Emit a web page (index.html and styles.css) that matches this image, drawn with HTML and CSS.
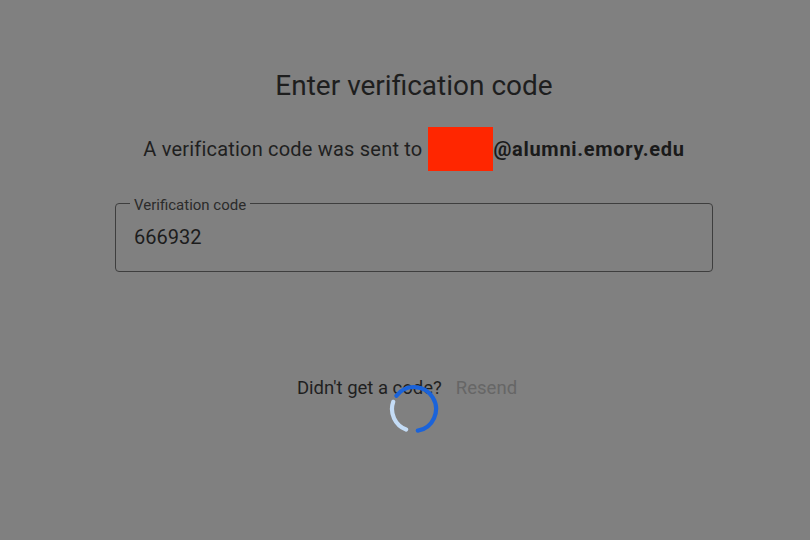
FILE: index.html
```html
<!DOCTYPE html>
<html lang="en">
<head>
<meta charset="utf-8">
<title>Enter verification code</title>
<link rel="stylesheet" href="styles.css">
</head>
<body>
<main class="page">
  <h1 class="title">Enter verification code</h1>
  <p class="subtitle">
    <span class="subtitle-text">A verification code was sent to</span>
    <span class="redact"></span>
    <strong class="email">@alumni.emory.edu</strong>
  </p>
  <div class="field">
    <label class="field-label" for="code">Verification code</label>
    <div class="field-value" id="code">666932</div>
  </div>
  <div class="resend-row">
    <span class="resend-q">Didn't get a code?</span>
    <button class="resend-btn" type="button">Resend</button>
    <svg class="spinner" width="50" height="50" viewBox="0 0 50 50" aria-hidden="true">
      <path d="M7.43 11.76 A22 22 0 1 1 28.82 46.67" fill="none" stroke="#1b63d9" stroke-width="4.2" stroke-linecap="round"/>
      <path d="M17.12 45.54 A22 22 0 0 1 4.20 17.84" fill="none" stroke="#c4dcf6" stroke-width="4.2" stroke-linecap="round"/>
    </svg>
  </div>
</main>
</body>
</html>
```
FILE: styles.css
```css
html, body {
  margin: 0;
  padding: 0;
  background: #808080;
  height: 100%;
}
body {
  font-family: Roboto, "Liberation Sans", sans-serif;
  color: #1f1f1f;
}
.page {
  width: 598px;
  margin-left: 115px;
  padding-top: 68px;
  display: flex;
  flex-direction: column;
  align-items: stretch;
}
.title {
  margin: 0;
  font-size: 28px;
  line-height: 36px;
  font-weight: 400;
  text-align: center;
  color: #1e1e1e;
}
.subtitle {
  margin: 23px 0 0;
  display: flex;
  justify-content: center;
  align-items: center;
  font-size: 20px;
  line-height: 44px;
  height: 44px;
}
.subtitle-text {
  margin-right: 6px;
  letter-spacing: 0.2px;
}
.redact {
  display: inline-block;
  width: 65px;
  height: 44px;
  background: #ff2600;
}
.email {
  font-weight: 700;
  letter-spacing: 0.7px;
  color: #1a1a1a;
}
.field {
  position: relative;
  margin-top: 32px;
  border: 1px solid #3e3e3e;
  border-radius: 4px;
  height: 67px;
  box-sizing: content-box;
}
.field-label {
  position: absolute;
  left: 14px;
  top: -7px;
  padding: 0 4px;
  background: #808080;
  font-size: 15px;
  line-height: 16px;
  color: #2b2b2b;
}
.field-value {
  padding: 21px 18px 0;
  font-size: 20px;
  line-height: 24px;
  color: #1c1c1c;
}
.resend-row {
  position: relative;
  margin-top: 104px;
  margin-left: -2px;
  display: flex;
  justify-content: center;
  align-items: center;
  gap: 2px;
  font-size: 18.5px;
  line-height: 24px;
}
.resend-q {
  color: #1f1f1f;
}
.resend-btn {
  border: 0;
  background: none;
  padding: 0 12px;
  font: inherit;
  color: #666666;
}
.spinner {
  position: absolute;
  left: 276px;
  top: 8px;
}
```
